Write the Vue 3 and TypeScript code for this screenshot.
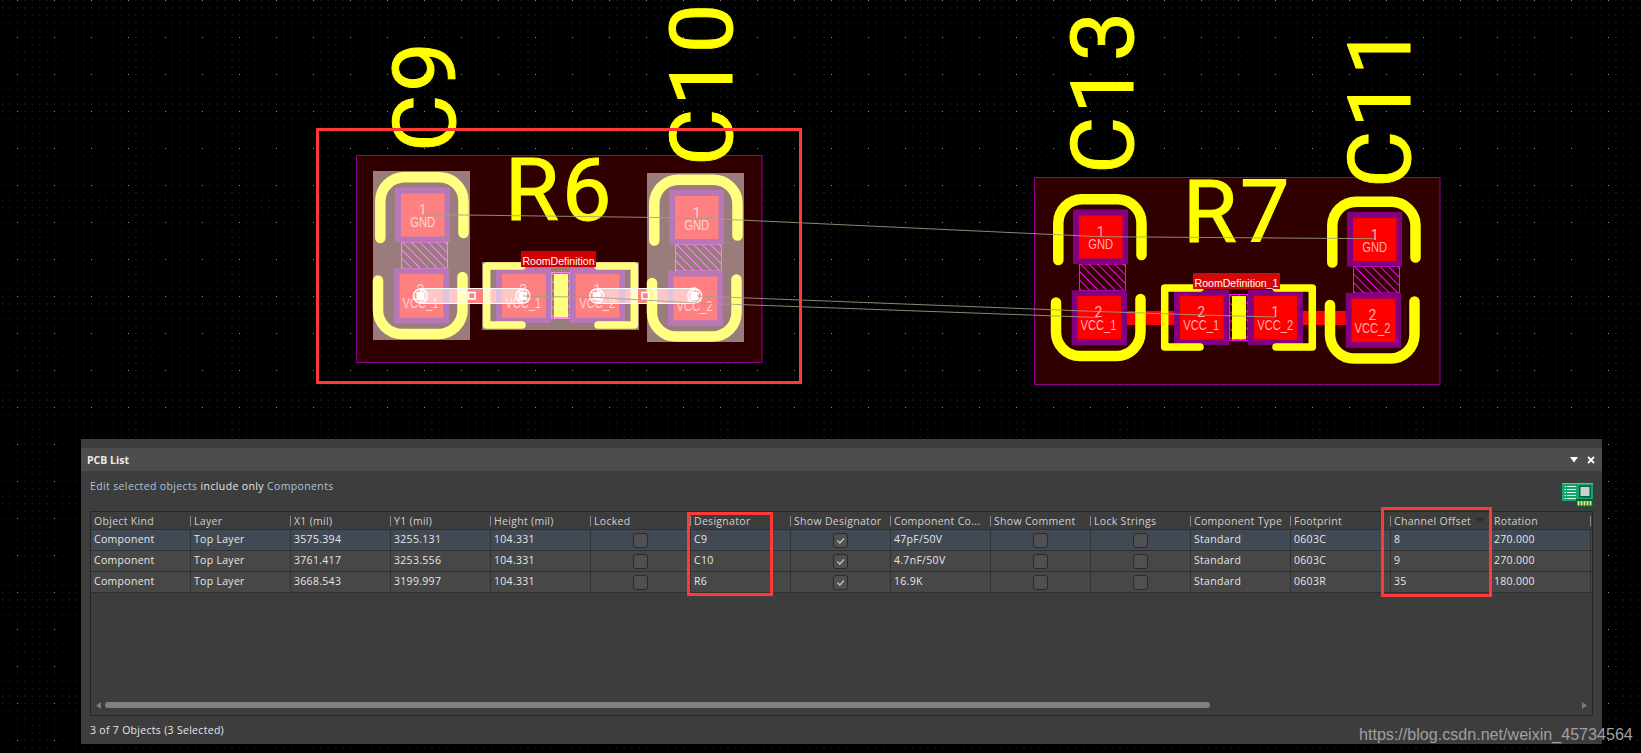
<script setup lang="ts">
interface Cap {
  name: string
  net: string
  dx: number
  dy: number
  textX: number
  textY: number
}

interface Room {
  label: string
  labelX: number
  labelWidth: number
  designator: string
  dx: number
  dy: number
  selected: boolean
  caps: Cap[]
}

interface Row {
  kind: string
  layer: string
  x1: string
  y1: string
  height: string
  designator: string
  comment: string
  footprint: string
  offset: string
  rotation: string
}

const rooms: Room[] = [
  {
    label: 'RoomDefinition',
    labelX: 521,
    labelWidth: 75,
    designator: 'R6',
    dx: 0,
    dy: 0,
    selected: true,
    caps: [
      { name: 'C9', net: 'VCC_1', dx: 0, dy: 0, textX: 455, textY: 152 },
      { name: 'C10', net: 'VCC_2', dx: 274, dy: 2.5, textX: 732, textY: 166 },
    ],
  },
  {
    label: 'RoomDefinition_1',
    labelX: 515,
    labelWidth: 87,
    designator: 'R7',
    dx: 678,
    dy: 22,
    selected: false,
    caps: [
      { name: 'C13', net: 'VCC_1', dx: 0, dy: 0, textX: 455, textY: 152 },
      { name: 'C11', net: 'VCC_2', dx: 274, dy: 2.5, textX: 732, textY: 166 },
    ],
  },
]

const ratsnest = [
  '423,214.5 697,218 1100,236.7 1375,238.7',
  '523,296 597,297.5 697,303 1098,317.5',
  '697,296 1098,311.5 1202,315 1275,317',
]

const handles = [420.5, 523, 596.7, 694.7]

const columns = [
  'Object Kind',
  'Layer',
  'X1 (mil)',
  'Y1 (mil)',
  'Height (mil)',
  'Locked',
  'Designator',
  'Show Designator',
  'Component Co...',
  'Show Comment',
  'Lock Strings',
  'Component Type',
  'Footprint',
  'Channel Offset',
  'Rotation',
]

const rows: Row[] = [
  { kind: 'Component', layer: 'Top Layer', x1: '3575.394', y1: '3255.131', height: '104.331', designator: 'C9', comment: '47pF/50V', footprint: '0603C', offset: '8', rotation: '270.000' },
  { kind: 'Component', layer: 'Top Layer', x1: '3761.417', y1: '3253.556', height: '104.331', designator: 'C10', comment: '4.7nF/50V', footprint: '0603C', offset: '9', rotation: '270.000' },
  { kind: 'Component', layer: 'Top Layer', x1: '3668.543', y1: '3199.997', height: '104.331', designator: 'R6', comment: '16.9K', footprint: '0603R', offset: '35', rotation: '180.000' },
]

const minorDots = [0, 7.4, 14.8, 22.2, 29.6]
</script>

<template>
  <div class="screen">
    <!-- free canvas: the board is drawn at its own coordinates -->
    <svg class="board" width="1641" height="753" viewBox="0 0 1641 753">
      <defs>
        <pattern id="grid" patternUnits="userSpaceOnUse" x="17" y="0" width="37" height="37">
          <template v-for="gx in minorDots" :key="gx">
            <rect v-for="gy in minorDots" :key="gy" :x="gx" :y="gy" width="1" height="1" fill="#2c2c2c" />
          </template>
          <rect x="0" y="0" width="1" height="1" fill="#8c8c8c" />
        </pattern>
        <pattern id="hatch" patternUnits="userSpaceOnUse" width="6" height="6" patternTransform="rotate(45)">
          <line x1="0" y1="0.5" x2="6" y2="0.5" stroke="#ff00ff" stroke-width="1" />
        </pattern>
        <pattern id="hatch-sel" patternUnits="userSpaceOnUse" width="6" height="6" patternTransform="rotate(45)">
          <line x1="0" y1="0.5" x2="6" y2="0.5" stroke="#ff80ff" stroke-width="1" />
        </pattern>
      </defs>
      <rect width="1641" height="753" fill="url(#grid)" shape-rendering="crispEdges" />

      <g
        v-for="room in rooms"
        :key="room.designator"
        :class="{ sel: room.selected }"
        :transform="`translate(${room.dx} ${room.dy})`"
      >
        <rect class="room" x="356.5" y="155.5" width="405.5" height="207" />
        <template v-if="room.selected">
          <rect class="ghost" x="373" y="171" width="97" height="169" />
          <rect class="ghost" x="647" y="173" width="97" height="169" />
          <rect class="ghost" x="482" y="262" width="157" height="68" />
        </template>

        <rect class="track" x="420" y="289" width="131" height="14" />
        <rect class="track" x="570" y="289" width="124" height="14" />

        <g v-for="cap in room.caps" :key="cap.name" :transform="`translate(${cap.dx} ${cap.dy})`">
          <rect
            class="hatch"
            :fill="room.selected ? 'url(#hatch-sel)' : 'url(#hatch)'"
            x="401.5"
            y="242"
            width="46"
            height="26.5"
          />
          <rect class="pad" x="395" y="187.5" width="55" height="54.5" />
          <rect class="copper" x="401" y="193.5" width="43.5" height="43" />
          <rect class="pad" x="393.7" y="268.3" width="55.3" height="55" />
          <rect class="copper" x="399.5" y="274" width="43.7" height="43.7" />
          <path class="silk" d="M380.3 238V201A24 24 0 0 1 404 177.3H440A24 24 0 0 1 463.5 201V233" />
          <path class="silk" d="M378 280.5V310A24 24 0 0 0 402 334H438.5A24 24 0 0 0 462.5 310V277" />
          <text class="pad-text pad-num" x="422.7" y="215" text-anchor="middle">1</text>
          <text class="pad-text" x="422.7" y="227.3" text-anchor="middle" textLength="25" lengthAdjust="spacingAndGlyphs">GND</text>
          <text class="pad-text pad-num" x="420.5" y="295.3" text-anchor="middle">2</text>
          <text class="pad-text" x="420.5" y="308" text-anchor="middle" textLength="36" lengthAdjust="spacingAndGlyphs">{{ cap.net }}</text>
        </g>

        <!-- resistor between the two caps -->
        <rect
          class="hatch"
          :fill="room.selected ? 'url(#hatch-sel)' : 'url(#hatch)'"
          x="551.5"
          y="272.5"
          width="18.5"
          height="46"
        />
        <rect class="body" x="554" y="274" width="14" height="43.5" />
        <rect class="pad" x="496" y="268" width="55" height="55" />
        <rect class="copper" x="502" y="274" width="43.7" height="43.7" />
        <rect class="pad" x="570" y="268" width="55" height="55" />
        <rect class="copper" x="575.7" y="274" width="43.5" height="43.7" />
        <path class="silk thin" d="M522 266H486.7V325H522" />
        <path class="silk thin" d="M598 266H634.3V325H598" />
        <text class="pad-text pad-num" x="523.3" y="295.3" text-anchor="middle">2</text>
        <text class="pad-text" x="523.3" y="308" text-anchor="middle" textLength="36" lengthAdjust="spacingAndGlyphs">VCC_1</text>
        <text class="pad-text pad-num" x="597.3" y="295.3" text-anchor="middle">1</text>
        <text class="pad-text" x="597.3" y="308" text-anchor="middle" textLength="36" lengthAdjust="spacingAndGlyphs">VCC_2</text>

        <template v-if="room.selected">
          <rect class="glow" x="420" y="289" width="47" height="14" />
          <rect class="glow" x="483" y="289" width="40" height="14" />
          <rect class="glow" x="597" y="289" width="41" height="14" />
          <rect class="glow" x="653" y="289" width="42" height="14" />
          <path class="edge" d="M420 288.5H523M420 303.5H523M597 288.5H695M597 303.5H695" />
          <rect class="knob" x="468.5" y="292.5" width="6.5" height="6.5" />
          <rect class="knob" x="642" y="292.5" width="6.5" height="6.5" />
          <g v-for="hx in handles" :key="hx">
            <circle class="ring" :cx="hx" cy="296" r="7" />
            <rect class="dot" :x="hx - 4" y="292" width="8" height="8" />
          </g>
        </template>

        <text class="big" x="504.7" y="220">{{ room.designator }}</text>
        <text
          v-for="cap in room.caps"
          :key="cap.name"
          class="big"
          :transform="`translate(${cap.textX} ${cap.textY}) rotate(-90)`"
        >{{ cap.name }}</text>

        <rect class="label-box" :x="room.labelX" y="251" :width="room.labelWidth" height="16" />
        <text class="label-text" :x="room.labelX + 1.5" y="265.3" :textLength="room.labelWidth - 3" lengthAdjust="spacingAndGlyphs">{{ room.label }}</text>
      </g>

      <polyline v-for="net in ratsnest" :key="net" class="net" :points="net" />
      <rect class="callout" x="317.5" y="129.5" width="483" height="253" />
    </svg>

    <section class="panel">
      <header class="title-bar">
        <span class="title">PCB List</span>
        <span class="title-tools">
          <svg width="8" height="6" viewBox="0 0 8 6"><path d="M0 0H8L4 5.5Z" fill="#fff" /></svg>
          <svg width="8" height="8" viewBox="0 0 8 8"><path d="M1 1L7 7M7 1L1 7" stroke="#fff" stroke-width="1.8" /></svg>
        </span>
      </header>

      <div class="info">
        <span class="filter">
          <span class="link">Edit selected objects</span> include only <span class="link">Components</span>
        </span>
        <svg class="board-icon" width="32" height="24" viewBox="0 0 32 24">
          <rect x="0" y="0" width="31" height="18" fill="#13a56b" />
          <rect x="0" y="0" width="31" height="1" fill="#3fd095" />
          <path d="M5 3.5H14M5 6.5H14M5 9.5H14M5 12.5H14M5 15.5H14" stroke="#e6f5ea" stroke-width="1.2" />
          <path d="M2.5 3.5H4M2.5 6.5H4M2.5 9.5H4M2.5 12.5H4M2.5 15.5H4" stroke="#e6f5ea" stroke-width="1.2" />
          <rect x="17" y="2.5" width="12" height="12" fill="#0b5c3e" />
          <rect x="18.5" y="4" width="9" height="9" fill="#c8d2cc" />
          <rect x="14" y="16" width="18" height="8" fill="#0b5c3e" />
          <path d="M16.5 18V22.5M19.5 18V22.5M22.5 18V22.5M25.5 18V22.5M28.5 18V22.5" stroke="#e8e86a" stroke-width="2" />
        </svg>
      </div>

      <div class="table">
        <div class="grid-row head">
          <div v-for="col in columns" :key="col" class="head-cell">
            <span>{{ col }}</span>
            <svg v-if="col === 'Channel Offset'" class="sort" width="8" height="4" viewBox="0 0 8 4"><path d="M0 0H8L4 4Z" fill="#2a2a2a" /></svg>
          </div>
        </div>
        <div v-for="(row, i) in rows" :key="row.designator" class="grid-row body-row" :class="{ current: i === 0 }">
          <div class="cell">{{ row.kind }}</div>
          <div class="cell">{{ row.layer }}</div>
          <div class="cell">{{ row.x1 }}</div>
          <div class="cell">{{ row.y1 }}</div>
          <div class="cell">{{ row.height }}</div>
          <div class="cell center"><span class="check"></span></div>
          <div class="cell">{{ row.designator }}</div>
          <div class="cell center">
            <span class="check">
              <svg width="13" height="13" viewBox="0 0 13 13"><path d="M3.5 6.5L5.8 9L10 4.5" fill="none" stroke="#c4c4c4" stroke-width="1.2" /></svg>
            </span>
          </div>
          <div class="cell">{{ row.comment }}</div>
          <div class="cell center"><span class="check"></span></div>
          <div class="cell center"><span class="check"></span></div>
          <div class="cell">Standard</div>
          <div class="cell">{{ row.footprint }}</div>
          <div class="cell">{{ row.offset }}</div>
          <div class="cell">{{ row.rotation }}</div>
        </div>
        <div class="spacer"></div>
        <div class="scroller">
          <svg width="5" height="7" viewBox="0 0 5 7"><path d="M5 0V7L0 3.5Z" fill="#7a7a7a" /></svg>
          <div class="scroll-track"><div class="scroll-thumb"></div></div>
          <svg width="5" height="7" viewBox="0 0 5 7"><path d="M0 0V7L5 3.5Z" fill="#7a7a7a" /></svg>
        </div>
      </div>

      <footer class="status">3 of 7 Objects (3 Selected)</footer>

      <div class="mark mark-designator"></div>
      <div class="mark mark-offset"></div>
    </section>

    <div class="watermark">https://blog.csdn.net/weixin_45734564</div>
  </div>
</template>

<style scoped>
.screen {
  position: relative;
  width: 1641px;
  height: 753px;
  overflow: hidden;
  background: #000;
  display: flex;
  flex-direction: column;
}

.board {
  position: absolute;
  left: 0;
  top: 0;
}

.room {
  fill: rgba(56, 0, 0, 0.86);
  stroke: #900090;
  stroke-width: 1;
}

.ghost {
  fill: #9a7c7c;
}

.track {
  fill: #ff0000;
}

.pad {
  fill: #800080;
}

.copper {
  fill: #ff0000;
}

.hatch {
  stroke: #ff00ff;
  stroke-width: 1;
}

.body {
  fill: #ffff00;
}

.silk {
  fill: none;
  stroke: #ffff00;
  stroke-width: 10.5;
  stroke-linecap: round;
}

.silk.thin {
  stroke-width: 7.5;
  stroke-linejoin: round;
}

.pad-text {
  font-family: "Liberation Sans", Arial, sans-serif;
  font-size: 14px;
  fill: #ffb0b0;
}

.pad-num {
  font-family: Roboto, "Liberation Sans", sans-serif;
}

.sel .track,
.sel .copper {
  fill: #ff8080;
}

.sel .pad {
  fill: #b878b8;
}

.sel .hatch {
  stroke: #ff80ff;
}

.sel .body {
  fill: #ffff80;
}

.sel .silk {
  stroke: #ffff80;
}

.sel .pad-text {
  fill: #ffd4d4;
}

.glow {
  fill: rgba(255, 255, 255, 0.55);
}

.edge {
  stroke: #fff;
  stroke-width: 1;
  fill: none;
}

.knob {
  fill: #ff8080;
  stroke: #fff;
  stroke-width: 1.6;
}

.ring {
  fill: rgba(255, 255, 255, 0.25);
  stroke: #fff;
  stroke-width: 1.4;
}

.dot {
  fill: #fff;
}

.big {
  font-family: Roboto, "Liberation Sans", sans-serif;
  font-size: 88px;
  letter-spacing: 3px;
  fill: #ffff00;
  stroke: #ffff00;
  stroke-width: 1;
}

.label-box {
  fill: #d40808;
}

.label-text {
  font-family: "Liberation Sans", Arial, sans-serif;
  font-size: 11.5px;
  fill: #fff;
}

.sel .label-box {
  fill: #d00000;
}

.net {
  fill: none;
  stroke: #a0a084;
  stroke-width: 1;
  opacity: 0.85;
}

.callout {
  fill: none;
  stroke: #ff3838;
  stroke-width: 3;
}

.panel {
  position: relative;
  box-sizing: border-box;
  width: 1521px;
  height: 305px;
  margin: 439px 0 0 81px;
  padding-top: 9px;
  display: flex;
  flex-direction: column;
  background: #3d3d3d;
  font-family: "Open Sans", "Noto Sans", sans-serif;
  font-size: 10.5px;
  letter-spacing: 0.3px;
  color: #e6e6e6;
}

.title-bar {
  height: 23px;
  flex: none;
  display: flex;
  align-items: center;
  justify-content: space-between;
  padding: 0 7px 0 6px;
  background: #4d4d4d;
}

.title {
  font-weight: 700;
  font-size: 10.5px;
  letter-spacing: 0;
  color: #ececec;
}

.title-tools {
  display: flex;
  align-items: center;
  gap: 9px;
}

.info {
  height: 40px;
  flex: none;
  display: flex;
  justify-content: space-between;
  padding: 0 8px 0 9px;
}

.filter {
  margin-top: 7px;
  line-height: 16px;
  letter-spacing: 0.37px;
  color: #e4e4e4;
}

.link {
  color: #a9c4de;
}

.board-icon {
  align-self: flex-end;
  margin-bottom: 4px;
}

.table {
  box-sizing: border-box;
  flex: none;
  width: 1503px;
  height: 205px;
  margin-left: 9px;
  display: flex;
  flex-direction: column;
  border: 1px solid #262626;
}

.grid-row {
  display: grid;
  grid-template-columns: repeat(15, 100px);
  flex: none;
  border-bottom: 1px solid #2f2f2f;
}

.head {
  height: 18px;
  box-sizing: border-box;
  color: #cfcfcf;
}

.head-cell {
  position: relative;
  display: flex;
  align-items: center;
  padding-left: 3px;
  white-space: nowrap;
}

.head-cell:first-child,
.cell:first-child {
  padding-left: 3px;
}

.head-cell::after {
  content: "";
  position: absolute;
  right: 0;
  top: 4px;
  height: 10px;
  border-right: 1px solid #8a8a8a;
}

.sort {
  position: absolute;
  right: 7px;
  top: 6px;
}

.body-row {
  height: 21px;
  box-sizing: border-box;
  background: #474747;
}

.body-row.current {
  background: #414a54;
}

.cell {
  display: flex;
  align-items: center;
  padding: 0 0 3px 3px;
  border-right: 1px solid #333;
  white-space: nowrap;
}

.cell.center {
  justify-content: center;
  padding: 0;
}

.check {
  box-sizing: border-box;
  width: 15px;
  height: 15px;
  border: 1px solid #2a2a2a;
  border-radius: 3px;
  background: #505050;
  display: flex;
}

.spacer {
  flex: 1;
}

.scroller {
  height: 14px;
  flex: none;
  display: flex;
  align-items: center;
  gap: 3px;
  padding: 0 5px 3px;
}

.scroll-track {
  flex: 1;
  height: 6px;
}

.scroll-thumb {
  width: 1105px;
  height: 6px;
  margin-left: 1px;
  border-radius: 3px;
  background: #808080;
}

.status {
  flex: 1;
  display: flex;
  align-items: center;
  padding-left: 9px;
}

.mark {
  position: absolute;
  box-sizing: border-box;
  border: 3px solid #ff3838;
}

.mark-designator {
  left: 606px;
  top: 73px;
  width: 86px;
  height: 84px;
}

.mark-offset {
  left: 1300px;
  top: 68px;
  width: 111px;
  height: 90px;
}

.watermark {
  position: absolute;
  left: 1359px;
  top: 724px;
  font-family: "Liberation Sans", Arial, sans-serif;
  font-size: 16.1px;
  line-height: 20px;
  color: #a0a0a0;
  white-space: nowrap;
}
</style>

<style>
html,
body {
  margin: 0;
  background: #000;
}
</style>
